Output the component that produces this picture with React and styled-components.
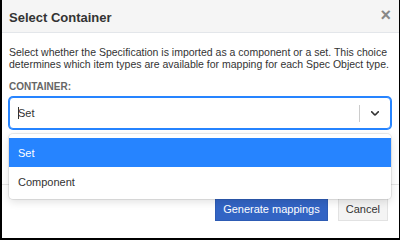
import styled, { createGlobalStyle } from "styled-components";

const GlobalStyle = createGlobalStyle`
  html, body {
    margin: 0;
    padding: 0;
    background: #fff;
  }
  * {
    box-sizing: border-box;
  }
`;

const App = () => {
  return (
    <>
      <GlobalStyle />
      <Modal>
        <Header>
          <Title>Select Container</Title>
          <Close>×</Close>
        </Header>
        <Body>
          <Description>
            Select whether the Specification is imported as a component or a
            set. This choice determines which item types are available for
            mapping for each Spec Object type.
          </Description>
          <Label>CONTAINER:</Label>
          <SelectWrap>
            <Control>
              <Value>
                <Caret />
                Set
              </Value>
              <Separator />
              <Indicator>
                <svg width="20" height="20" viewBox="0 0 20 20">
                  <path
                    fill="#333"
                    d="M4.516 7.548c0.436-0.446 1.043-0.481 1.576 0l3.908 3.747 3.908-3.747c0.533-0.481 1.141-0.446 1.574 0 0.436 0.445 0.408 1.197 0 1.615-0.406 0.418-4.695 4.502-4.695 4.502-0.217 0.223-0.502 0.335-0.787 0.335s-0.57-0.112-0.789-0.335c0 0-4.287-4.084-4.695-4.502s-0.436-1.170 0-1.615z"
                  />
                </svg>
              </Indicator>
            </Control>
            <Menu>
              <Option $selected>Set</Option>
              <Option>Component</Option>
            </Menu>
          </SelectWrap>
        </Body>
        <Footer>
          <PrimaryBtn>Generate mappings</PrimaryBtn>
          <DefaultBtn>Cancel</DefaultBtn>
        </Footer>
      </Modal>
    </>
  );
};

export default App;

const Modal = styled.div`
  width: 400px;
  height: 240px;
  display: flex;
  flex-direction: column;
  border-left: 2px solid #000;
  border-right: 1px solid #000;
  border-bottom: 2px solid #000;
  background: #fff;
  font-family: "Liberation Sans", Arial, sans-serif;
  color: #333;
`;

const Header = styled.div`
  height: 33px;
  flex-shrink: 0;
  display: flex;
  align-items: center;
  justify-content: space-between;
  padding: 0 8px 0 7px;
  background: #f5f5f5;
  border-bottom: 1px solid #e3e6ea;
`;

const Title = styled.div`
  font-size: 13px;
  font-weight: 700;
  color: #333;
  padding-top: 2px;
`;

const Close = styled.div`
  font-size: 18px;
  font-weight: 700;
  color: #888;
  line-height: 1;
  margin-top: -2px;
`;

const Body = styled.div`
  flex: 1;
  padding: 13px 8px 0 7px;
`;

const Description = styled.p`
  margin: 0;
  font-size: 10.5px;
  line-height: 12px;
  color: #333;
`;

const Label = styled.div`
  margin-top: 11px;
  font-size: 10px;
  line-height: 12px;
  font-weight: 700;
  color: #666;
`;

const SelectWrap = styled.div`
  position: relative;
  margin-top: 4px;
`;

const Control = styled.div`
  height: 32px;
  display: flex;
  align-items: center;
  border: 1px solid #2684ff;
  box-shadow: 0 0 0 1px #2684ff;
  border-radius: 4px;
  background: #fff;
`;

const Value = styled.div`
  flex: 1;
  display: flex;
  align-items: center;
  padding-left: 8px;
  font-size: 11px;
  color: #333;
`;

const Caret = styled.span`
  width: 1px;
  height: 12px;
  background: #333;
  margin-right: -1px;
`;

const Separator = styled.span`
  width: 1px;
  height: 17px;
  background: #ccc;
`;

const Indicator = styled.div`
  width: 30px;
  display: flex;
  align-items: center;
  justify-content: center;
  svg {
    width: 14px;
    height: 14px;
  }
`;

const Menu = styled.div`
  position: absolute;
  top: calc(100% + 5px);
  left: 0;
  right: 0;
  padding: 4px 0 3px;
  background: #fff;
  border-radius: 4px;
  box-shadow: 0 0 0 1px rgba(0, 0, 0, 0.08), 0 3px 8px rgba(0, 0, 0, 0.12);
  z-index: 2;
`;

const Option = styled.div`
  height: 29px;
  display: flex;
  align-items: center;
  padding-left: 9px;
  font-size: 11px;
  background: ${(p) => (p.$selected ? "#2684ff" : "#fff")};
  color: ${(p) => (p.$selected ? "#fff" : "#333")};
`;

const Footer = styled.div`
  height: 54px;
  flex-shrink: 0;
  display: flex;
  justify-content: flex-end;
  align-items: flex-start;
  gap: 10px;
  padding: 12px 11px 0 0;
  border-top: 1px solid #e5e5e5;
`;

const PrimaryBtn = styled.div`
  height: 24px;
  padding: 0 7px;
  display: flex;
  align-items: center;
  background: #3264c4;
  border: 1px solid #2d5bb4;
  color: #fff;
  font-size: 11px;
  cursor: pointer;
`;

const DefaultBtn = styled.div`
  height: 24px;
  padding: 0 7px;
  display: flex;
  align-items: center;
  background: #f4f4f4;
  border: 1px solid #e2e2e2;
  color: #333;
  font-size: 11px;
  cursor: pointer;
`;
